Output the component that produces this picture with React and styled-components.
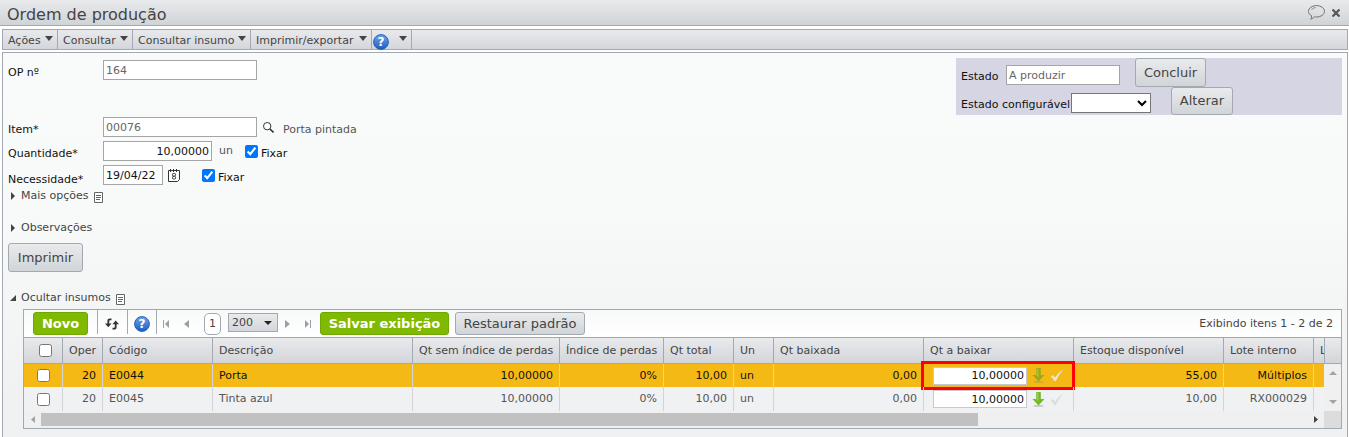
import React from 'react';
import styled, { createGlobalStyle, css } from 'styled-components';

const line = '#a3a9b3';

const GlobalStyle = createGlobalStyle`
  * { box-sizing: border-box; }
  html { height: 100%; }
  body {
    margin: 0;
    height: 100%;
    background: #fff;
    color: #444;
    font-family: "DejaVu Sans", Verdana, sans-serif;
    font-size: 11px;
    line-height: 14px;
  }
  #root { height: 100%; }
  button, input, select { font-family: inherit; font-size: inherit; margin: 0; }
  svg { display: block; flex: none; }
`;

const Page = styled.div`
  min-height: 100%;
  display: flex;
  flex-direction: column;
`;

const TitleBar = styled.header`
  height: 26px;
  flex: none;
  display: flex;
  align-items: center;
  justify-content: space-between;
  padding: 0 9px 0 7px;
  border-bottom: 1px solid ${line};
  background: linear-gradient(#e9eaec, #d0d4d7);
`;

const Title = styled.h1`
  margin: 0;
  padding-top: 5px;
  font-size: 16px;
  font-weight: normal;
  line-height: 20px;
  color: #444;
`;

const TitleActions = styled.div`
  display: flex;
  align-items: center;
  gap: 7px;
`;

const IconButton = styled.button`
  display: flex;
  align-items: center;
  justify-content: center;
  flex: none;
  padding: 0;
  border: 0;
  background: none;
  color: ${p => p.$color || '#444'};
`;

const MenuBar = styled.nav`
  display: flex;
  flex: none;
  height: 21px;
  margin: 3px 1px 0 2px;
  border: 1px solid ${line};
  background: linear-gradient(#e9eaec, #d3d6db);
`;

const MenuItem = styled.button`
  display: flex;
  align-items: center;
  justify-content: space-between;
  flex: none;
  width: ${p => p.$width}px;
  padding: 2px 4px 0 5px;
  border: 0;
  border-right: 1px solid ${line};
  background: none;
  color: #444;
  white-space: nowrap;

  & > svg:last-child { margin-bottom: 5px; }
`;

const HelpItem = styled(MenuItem)`
  padding-left: 1px;
  & > svg:first-child { margin-top: 2px; }
`;

const Panel = styled.main`
  flex: 1;
  margin: 2px 1px 0 2px;
  padding: 5px;
  border: 1px solid ${line};
  border-bottom: 0;
  background: linear-gradient(#f9fbfa 0, #f8faf9 160px, #eff1f3 340px);
`;

const Top = styled.div`
  display: flex;
  align-items: flex-start;
  justify-content: space-between;
`;

const Form = styled.form`
  display: flex;
  flex-direction: column;
  gap: 4px;
  padding-top: 2px;
`;

const Field = styled.div`
  display: flex;
  align-items: center;
  height: 20px;
  margin-bottom: ${p => (p.$spaced ? 33 : 0)}px;
`;

const Label = styled.label`
  width: 95px;
  padding-top: ${p => (p.$low ? 9 : 5)}px;
  color: #111;
`;

const TextInput = styled.input`
  width: ${p => p.$width}px;
  height: 20px;
  padding: 0 2px;
  border: 1px solid #a5a5a5;
  border-radius: 0;
  background: #fff;
  color: ${p => (p.$strong ? '#111' : '#666')};
  text-align: ${p => (p.$right ? 'right' : 'left')};
`;

const Lookup = styled(IconButton)`
  margin: 0 9px 0 6px;
`;

const Unit = styled.span`
  width: 33px;
  padding-left: 7px;
  color: #555;
`;

const ItemName = styled.span`
  padding-top: 5px;
  color: #555;
`;

const Calendar = styled(IconButton)`
  margin: 0 22px 0 5px;
`;

const Tick = styled.input`
  width: 13px;
  height: 13px;
  flex: none;
`;

const TickLabel = styled.label`
  display: flex;
  align-items: center;
  gap: 3px;
  padding-top: 1px;
  color: #111;

  span { padding-top: 4px; }
`;

const StatusBox = styled.section`
  width: 386px;
  height: 57px;
  flex: none;
  padding-left: 5px;
  background: #d6d5e3;
`;

const StatusRow = styled.div`
  display: flex;
  align-items: center;
  height: ${p => p.$height}px;
`;

const StatusLabel = styled.label`
  flex: none;
  width: ${p => p.$width}px;
  padding-top: 8px;
  color: #111;
  white-space: nowrap;
`;

const StateInput = styled(TextInput)`
  margin: 5px 15px 0 0;
`;

const StateSelect = styled.select`
  width: 80px;
  height: 20px;
  margin: 4px 20px 0 0;
  border: 1px solid #767676;
  border-radius: 0;
  background: #fff;
`;

const primary = css`
  border-color: #6fa800;
  background: #7fba00;
  color: #fff;
  font-weight: bold;
`;

const Button = styled.button`
  flex: none;
  width: ${p => p.$width}px;
  height: ${p => p.$height || 29}px;
  padding: 0;
  border: 1px solid ${line};
  border-radius: 3px;
  background: linear-gradient(#e9eaec, #d1d5d8);
  color: #444;
  font-size: 13px;
  line-height: 18px;
  text-align: center;
  white-space: nowrap;
  ${p => p.$primary && primary}
`;

const Toggle = styled.button`
  display: flex;
  align-items: center;
  height: 14px;
  margin-top: ${p => p.$gap}px;
  padding: 0;
  border: 0;
  background: none;
  color: #444;
  line-height: 14px;

  span { padding: 0 5px 0 0; }
  & > svg:last-child { margin-top: 3px; }
`;

const Marker = styled.i`
  display: flex;
  justify-content: center;
  flex: none;
  width: 9px;
  margin-right: 4px;
`;

const Actions = styled.div`
  margin-top: 8px;
  display: flex;
`;

const Grid = styled.section`
  margin: 4px 0 0 15px;
  border: 1px solid ${line};
  background: #f0f1f3;
`;

const Toolbar = styled.div`
  display: flex;
  align-items: center;
  height: 27px;
  padding: 0 8px 0 9px;
  background: linear-gradient(#f8f9f9, #fff);
`;

const Separator = styled.span`
  width: 1px;
  height: 24px;
  flex: none;
  background: ${line};
  margin: 0 ${p => p.$right}px 3px ${p => p.$left}px;
`;

const Pager = styled.div`
  display: flex;
  align-items: center;
  flex: none;
  gap: ${p => p.$gap}px;
`;

const PageNumber = styled.span`
  width: 17px;
  height: 22px;
  margin: 0 7px 0 15px;
  border: 1px solid ${line};
  border-radius: 5px;
  background: #fff;
  line-height: 20px;
  text-align: center;
`;

const SizePicker = styled.span`
  position: relative;
  flex: none;
  margin: 0 7px 3px 0;

  select {
    display: block;
    appearance: none;
    width: 50px;
    height: 19px;
    padding: 0 3px;
    border: 1px solid ${line};
    border-radius: 0;
    background: linear-gradient(#e9eaec, #d3d6db);
    color: #444;
  }
  svg {
    position: absolute;
    right: 6px;
    top: 8px;
    pointer-events: none;
  }
`;

const GridButtons = styled.div`
  display: flex;
  gap: 6px;
  margin-left: 9px;
`;

const Count = styled.span`
  margin-left: auto;
  white-space: nowrap;
`;

const GridBody = styled.div`
  display: flex;
`;

const Viewport = styled.div`
  flex: 1;
  min-width: 0;
  overflow: auto hidden;
  scrollbar-width: none;
`;

const Table = styled.table`
  width: 1400px;
  table-layout: fixed;
  border-collapse: separate;
  border-spacing: 0;
`;

const Head = styled.th`
  height: 27px;
  padding: 1px 7px 0 6px;
  border: solid ${line};
  border-width: 1px 1px 1px 0;
  background: linear-gradient(#e9eaec, #d3d5da);
  color: #444;
  font-weight: normal;
  text-align: left;
  white-space: nowrap;
`;

const TickHead = styled(Head)`
  padding: 0 4px 0 9px;
  input { display: block; margin: 0 auto; }
`;

const Row = styled.tr`
  height: ${p => (p.$selected ? 23 : 24)}px;
  background: ${p => (p.$selected ? '#f5b916' : '#f0f1f3')};
  color: ${p => (p.$selected ? '#111' : '#555')};
`;

const Cell = styled.td`
  position: relative;
  padding: 0 6px;
  border-right: 1px solid #d2d4d8;
  text-align: ${p => p.$align || 'left'};
  white-space: nowrap;

  input[type='checkbox'] { display: block; margin: 0 auto; }
`;

const TickCell = styled(Cell)`
  padding: 0 7px;
`;

const QuantityEditor = styled.div`
  display: flex;
  align-items: center;
  padding-left: 3px;
  gap: 5px;
`;

const QuantityInput = styled(TextInput)`
  width: 94px;
  height: 18px;
  border-color: #c6c9ce;
`;

const Highlight = styled.span`
  position: absolute;
  inset: -3px -2px -3px -3px;
  border: 3px solid #f00;
  pointer-events: none;
`;

const Gutter = styled.div`
  display: flex;
  flex-direction: column;
  width: 17px;
  flex: none;
  background: #f0f0f0;
`;

const GutterHead = styled.div`
  height: 27px;
  border: solid ${line};
  border-width: 1px 0 1px 1px;
  background: linear-gradient(#e9eaec, #d3d5da);
`;

const GutterTrack = styled.div`
  flex: 1;
  display: flex;
  flex-direction: column;
  align-items: center;
  justify-content: space-between;
  padding: 7px 0;
  color: #a3a3a3;
`;

const ScrollBar = styled.div`
  display: flex;
  height: 17px;
  background: #f0f0f0;
`;

const ScrollArrow = styled(IconButton)`
  width: 17px;
`;

const ScrollTrack = styled.div`
  flex: 1;
  padding: 2px 0;
`;

const Thumb = styled.div`
  width: 74%;
  height: 13px;
  background: #c1c1c1;
`;

const Corner = styled.span`
  width: 17px;
  background: #dcdcdc;
`;

const Arrow = ({ dir = 'down', w = 8, h = 5, color = 'currentColor', bar }) => {
  const shape = {
    down: `0,0 ${w},0 ${w / 2},${h}`,
    up: `0,${h} ${w},${h} ${w / 2},0`,
    left: `${w},0 ${w},${h} 0,${h / 2}`,
    right: `0,0 0,${h} ${w},${h / 2}`,
    corner: `${w},0 ${w},${h} 0,${h}`,
  }[dir];
  const extra = bar ? 2 : 0;
  const start = bar === 'start' ? 2 : 0;
  return (
    <svg width={w + extra} height={h} fill={color} aria-hidden="true">
      <g transform={`translate(${start} 0)`}><polygon points={shape} /></g>
      {bar && <rect x={bar === 'start' ? 0 : w + 1} width="1" height={h} />}
    </svg>
  );
};

const HelpIcon = ({ id }) => (
  <svg width="16" height="16" viewBox="0 0 16 16" aria-hidden="true">
    <defs>
      <linearGradient id={id} x1="0" y1="0" x2="0" y2="1">
        <stop offset="0" stopColor="#6ea5e8" />
        <stop offset="1" stopColor="#1e5cc0" />
      </linearGradient>
    </defs>
    <circle cx="8" cy="8" r="7.4" fill={`url(#${id})`} stroke="#2560b4" />
    <text x="8" y="12" fill="#fff" fontSize="12" fontWeight="bold" textAnchor="middle">?</text>
  </svg>
);

const NoteIcon = () => (
  <svg width="9" height="11" viewBox="0 0 9 11" fill="none" stroke="#666" aria-hidden="true">
    <path d="M.5.5H8.500V10.500H.5Z" fill="#fff" />
    <path d="M2 3.500H7M2 5.500H7M2 7.500H6" />
  </svg>
);

const SearchIcon = () => (
  <svg width="11" height="11" viewBox="0 0 11 11" fill="none" stroke="#333" aria-hidden="true">
    <circle cx="4.200" cy="4.200" r="3.700" fill="#fff" />
    <path d="M7 7 10.500 10.500" strokeWidth="1.600" />
  </svg>
);

const CalendarIcon = () => (
  <svg width="12" height="13" viewBox="0 0 12 13" fill="none" stroke="#333" aria-hidden="true">
    <path d="M.5 1.500V12.500H9.500L11.500 10.500V1.500Z" fill="#fff" />
    <path d="M2.500 0V3M5.500 0V3M8.500 0V3" />
    <rect x="4.500" y="4.500" width="3" height="2.500" rx=".8" />
    <rect x="4.500" y="7.500" width="3" height="2.500" rx=".8" />
  </svg>
);

const ChatIcon = () => (
  <svg width="17" height="15" viewBox="0 0 17 15" fill="none" stroke="#707070" aria-hidden="true">
    <path d="M3.500 10.700C1.500 9.700.5 8 .5 6.300.5 3.200 4 .6 8.500.6s8 2.600 8 5.700-3.500 5.700-8 5.700q-1 0-2-.2Q5 13.500 2.800 14.200 4 12.500 3.500 10.700Z" />
    <path d="M3.500 5Q4.500 2.800 7.500 2.500" strokeWidth=".8" />
  </svg>
);

const CloseIcon = () => (
  <svg width="8" height="8" viewBox="0 0 8 8" stroke="#555" strokeWidth="2.200" aria-hidden="true">
    <path d="M.5.5 7.500 7.500M7.500.5.5 7.500" />
  </svg>
);

const RefreshIcon = () => (
  <svg width="14" height="12" viewBox="0 0 14 12" fill="none" stroke="#333" strokeWidth="1.800" aria-hidden="true">
    <path d="M6.500 1.300H5Q3.300 1.300 3.300 3V6" />
    <path d="M0 5.500H6.600L3.300 9.300Z" fill="#333" stroke="none" />
    <path d="M7.500 10.700H9Q10.700 10.700 10.700 9V6" />
    <path d="M7.400 6.300H14L10.700 2.500Z" fill="#333" stroke="none" />
  </svg>
);

const DownloadIcon = ({ faded }) => (
  <svg width="13" height="15" viewBox="0 0 13 15" opacity={faded ? 0.75 : 1} aria-hidden="true">
    <ellipse cx="6.500" cy="13.900" rx="5" ry=".9" fill="#777" opacity=".4" />
    <path d="M4.200 0H8.800V7H12.500L6.500 13.500.5 7H4.200Z" fill={faded ? '#7ea51c' : '#76b82c'} />
    <path d="M4.800.5H6.500V9L3 7.500H4.800Z" fill="#b9e070" opacity=".5" />
  </svg>
);

const CheckIcon = ({ light }) => (
  <svg width="14" height="13" viewBox="0 0 14 13" aria-hidden="true">
    <path d="M.8 7.500 2.800 6 5 8.600Q8.500 3 13.300.4 9 5 5.800 12.300H4.800Z" fill={light ? '#ebe6d3' : '#dcdddf'} />
  </svg>
);

const menu = [
  ['Ações', 55],
  ['Consultar', 75],
  ['Consultar insumo', 118],
  ['Imprimir/exportar', 121],
];

const columns = [
  ['Oper', 40],
  ['Código', 110],
  ['Descrição', 200],
  ['Qt sem índice de perdas', 147],
  ['Índice de perdas', 104],
  ['Qt total', 70],
  ['Un', 40],
  ['Qt baixada', 150],
  ['Qt a baixar', 150],
  ['Estoque disponível', 150],
  ['Lote interno', 90],
  ['L', 110],
];

const rows = [
  { code: 'E0044', name: 'Porta', stock: '55,00', lot: 'Múltiplos', selected: true },
  { code: 'E0045', name: 'Tinta azul', stock: '10,00', lot: 'RX000029', selected: false },
];

export default function App() {
  return (
    <Page>
      <GlobalStyle />
      <TitleBar>
        <Title>Ordem de produção</Title>
        <TitleActions>
          <IconButton aria-label="Comentários"><ChatIcon /></IconButton>
          <IconButton aria-label="Fechar"><CloseIcon /></IconButton>
        </TitleActions>
      </TitleBar>

      <MenuBar>
        {menu.map(([label, width]) => (
          <MenuItem key={label} $width={width}>{label}<Arrow /></MenuItem>
        ))}
        <HelpItem $width={40} aria-label="Ajuda"><HelpIcon id="help-menu" /><Arrow /></HelpItem>
      </MenuBar>

      <Panel>
        <Top>
          <Form onSubmit={e => e.preventDefault()}>
            <Field $spaced>
              <Label htmlFor="op">OP nº</Label>
              <TextInput id="op" $width={154} defaultValue="164" />
            </Field>
            <Field>
              <Label htmlFor="item">Item*</Label>
              <TextInput id="item" $width={154} defaultValue="00076" />
              <Lookup type="button" aria-label="Pesquisar"><SearchIcon /></Lookup>
              <ItemName>Porta pintada</ItemName>
            </Field>
            <Field>
              <Label htmlFor="qty">Quantidade*</Label>
              <TextInput id="qty" $width={109} $strong $right defaultValue="10,00000" />
              <Unit>un</Unit>
              <TickLabel><Tick type="checkbox" defaultChecked /><span>Fixar</span></TickLabel>
            </Field>
            <Field>
              <Label htmlFor="date" $low>Necessidade*</Label>
              <TextInput id="date" $width={60} $strong defaultValue="19/04/22" />
              <Calendar type="button" aria-label="Calendário"><CalendarIcon /></Calendar>
              <TickLabel><Tick type="checkbox" defaultChecked /><span>Fixar</span></TickLabel>
            </Field>
          </Form>

          <StatusBox>
            <StatusRow $height={29}>
              <StatusLabel htmlFor="state" $width={45}>Estado</StatusLabel>
              <StateInput id="state" $width={114} defaultValue="A produzir" />
              <Button $width={71}>Concluir</Button>
            </StatusRow>
            <StatusRow $height={28}>
              <StatusLabel htmlFor="custom-state" $width={110}>Estado configurável</StatusLabel>
              <StateSelect id="custom-state"><option value="" /></StateSelect>
              <Button $width={62} $height={28}>Alterar</Button>
            </StatusRow>
          </StatusBox>
        </Top>

        <Toggle $gap={4}>
          <Marker><Arrow dir="right" w={4} h={8} /></Marker><span>Mais opções</span><NoteIcon />
        </Toggle>
        <Toggle $gap={18}>
          <Marker><Arrow dir="right" w={4} h={8} /></Marker><span>Observações</span>
        </Toggle>
        <Actions><Button $width={75}>Imprimir</Button></Actions>
        <Toggle $gap={19}>
          <Marker><Arrow dir="corner" w={6} h={6} /></Marker><span>Ocultar insumos</span><NoteIcon />
        </Toggle>

        <Grid>
          <Toolbar>
            <Button $width={55} $height={23} $primary>Novo</Button>
            <Separator $left={9} $right={7} />
            <IconButton aria-label="Atualizar"><RefreshIcon /></IconButton>
            <Separator $left={8} $right={6} />
            <IconButton aria-label="Ajuda"><HelpIcon id="help-grid" /></IconButton>
            <Separator $left={6} $right={6} />
            <Pager $gap={15}>
              <IconButton $color="#9a9fa8" aria-label="Primeira página"><Arrow dir="left" w={4} h={8} bar="start" /></IconButton>
              <IconButton $color="#9a9fa8" aria-label="Página anterior"><Arrow dir="left" w={5} h={8} /></IconButton>
            </Pager>
            <PageNumber>1</PageNumber>
            <SizePicker>
              <select aria-label="Itens por página" defaultValue="200"><option>200</option></select>
              <Arrow dir="down" w={8} h={4} color="#222" />
            </SizePicker>
            <Pager $gap={15}>
              <IconButton $color="#9a9fa8" aria-label="Próxima página"><Arrow dir="right" w={5} h={8} /></IconButton>
              <IconButton $color="#9a9fa8" aria-label="Última página"><Arrow dir="right" w={4} h={8} bar="end" /></IconButton>
            </Pager>
            <GridButtons>
              <Button $width={129} $height={23} $primary>Salvar exibição</Button>
              <Button $width={130} $height={23}>Restaurar padrão</Button>
            </GridButtons>
            <Count>Exibindo itens 1 - 2 de 2</Count>
          </Toolbar>

          <GridBody>
            <Viewport>
              <Table>
                <colgroup>
                  <col style={{ width: 39 }} />
                  {columns.map(([label, width]) => <col key={label} style={{ width }} />)}
                </colgroup>
                <thead>
                  <tr>
                    <TickHead><Tick type="checkbox" aria-label="Selecionar todos" /></TickHead>
                    {columns.map(([label]) => <Head key={label}>{label}</Head>)}
                  </tr>
                </thead>
                <tbody>
                  {rows.map(row => (
                    <Row key={row.code} $selected={row.selected}>
                      <TickCell><Tick type="checkbox" aria-label={`Selecionar ${row.name}`} /></TickCell>
                      <Cell $align="right">20</Cell>
                      <Cell>{row.code}</Cell>
                      <Cell>{row.name}</Cell>
                      <Cell $align="right">10,00000</Cell>
                      <Cell $align="right">0%</Cell>
                      <Cell $align="right">10,00</Cell>
                      <Cell>un</Cell>
                      <Cell $align="right">0,00</Cell>
                      <Cell>
                        <QuantityEditor>
                          <QuantityInput aria-label={`Qt a baixar ${row.name}`} $strong $right defaultValue="10,00000" />
                          <IconButton aria-label="Baixar"><DownloadIcon faded={row.selected} /></IconButton>
                          <IconButton aria-label="Confirmar"><CheckIcon light={row.selected} /></IconButton>
                        </QuantityEditor>
                        {row.selected && <Highlight />}
                      </Cell>
                      <Cell $align="right">{row.stock}</Cell>
                      <Cell $align="right">{row.lot}</Cell>
                      <Cell />
                    </Row>
                  ))}
                </tbody>
              </Table>
            </Viewport>
            <Gutter>
              <GutterHead />
              <GutterTrack>
                <Arrow dir="up" w={8} h={4} />
                <Arrow dir="down" w={8} h={4} />
              </GutterTrack>
            </Gutter>
          </GridBody>

          <ScrollBar>
            <ScrollArrow $color="#a3a3a3" aria-label="Rolar para a esquerda"><Arrow dir="left" w={4} h={7} /></ScrollArrow>
            <ScrollTrack><Thumb /></ScrollTrack>
            <ScrollArrow $color="#444" aria-label="Rolar para a direita"><Arrow dir="right" w={4} h={7} /></ScrollArrow>
            <Corner />
          </ScrollBar>
        </Grid>
      </Panel>
    </Page>
  );
}
